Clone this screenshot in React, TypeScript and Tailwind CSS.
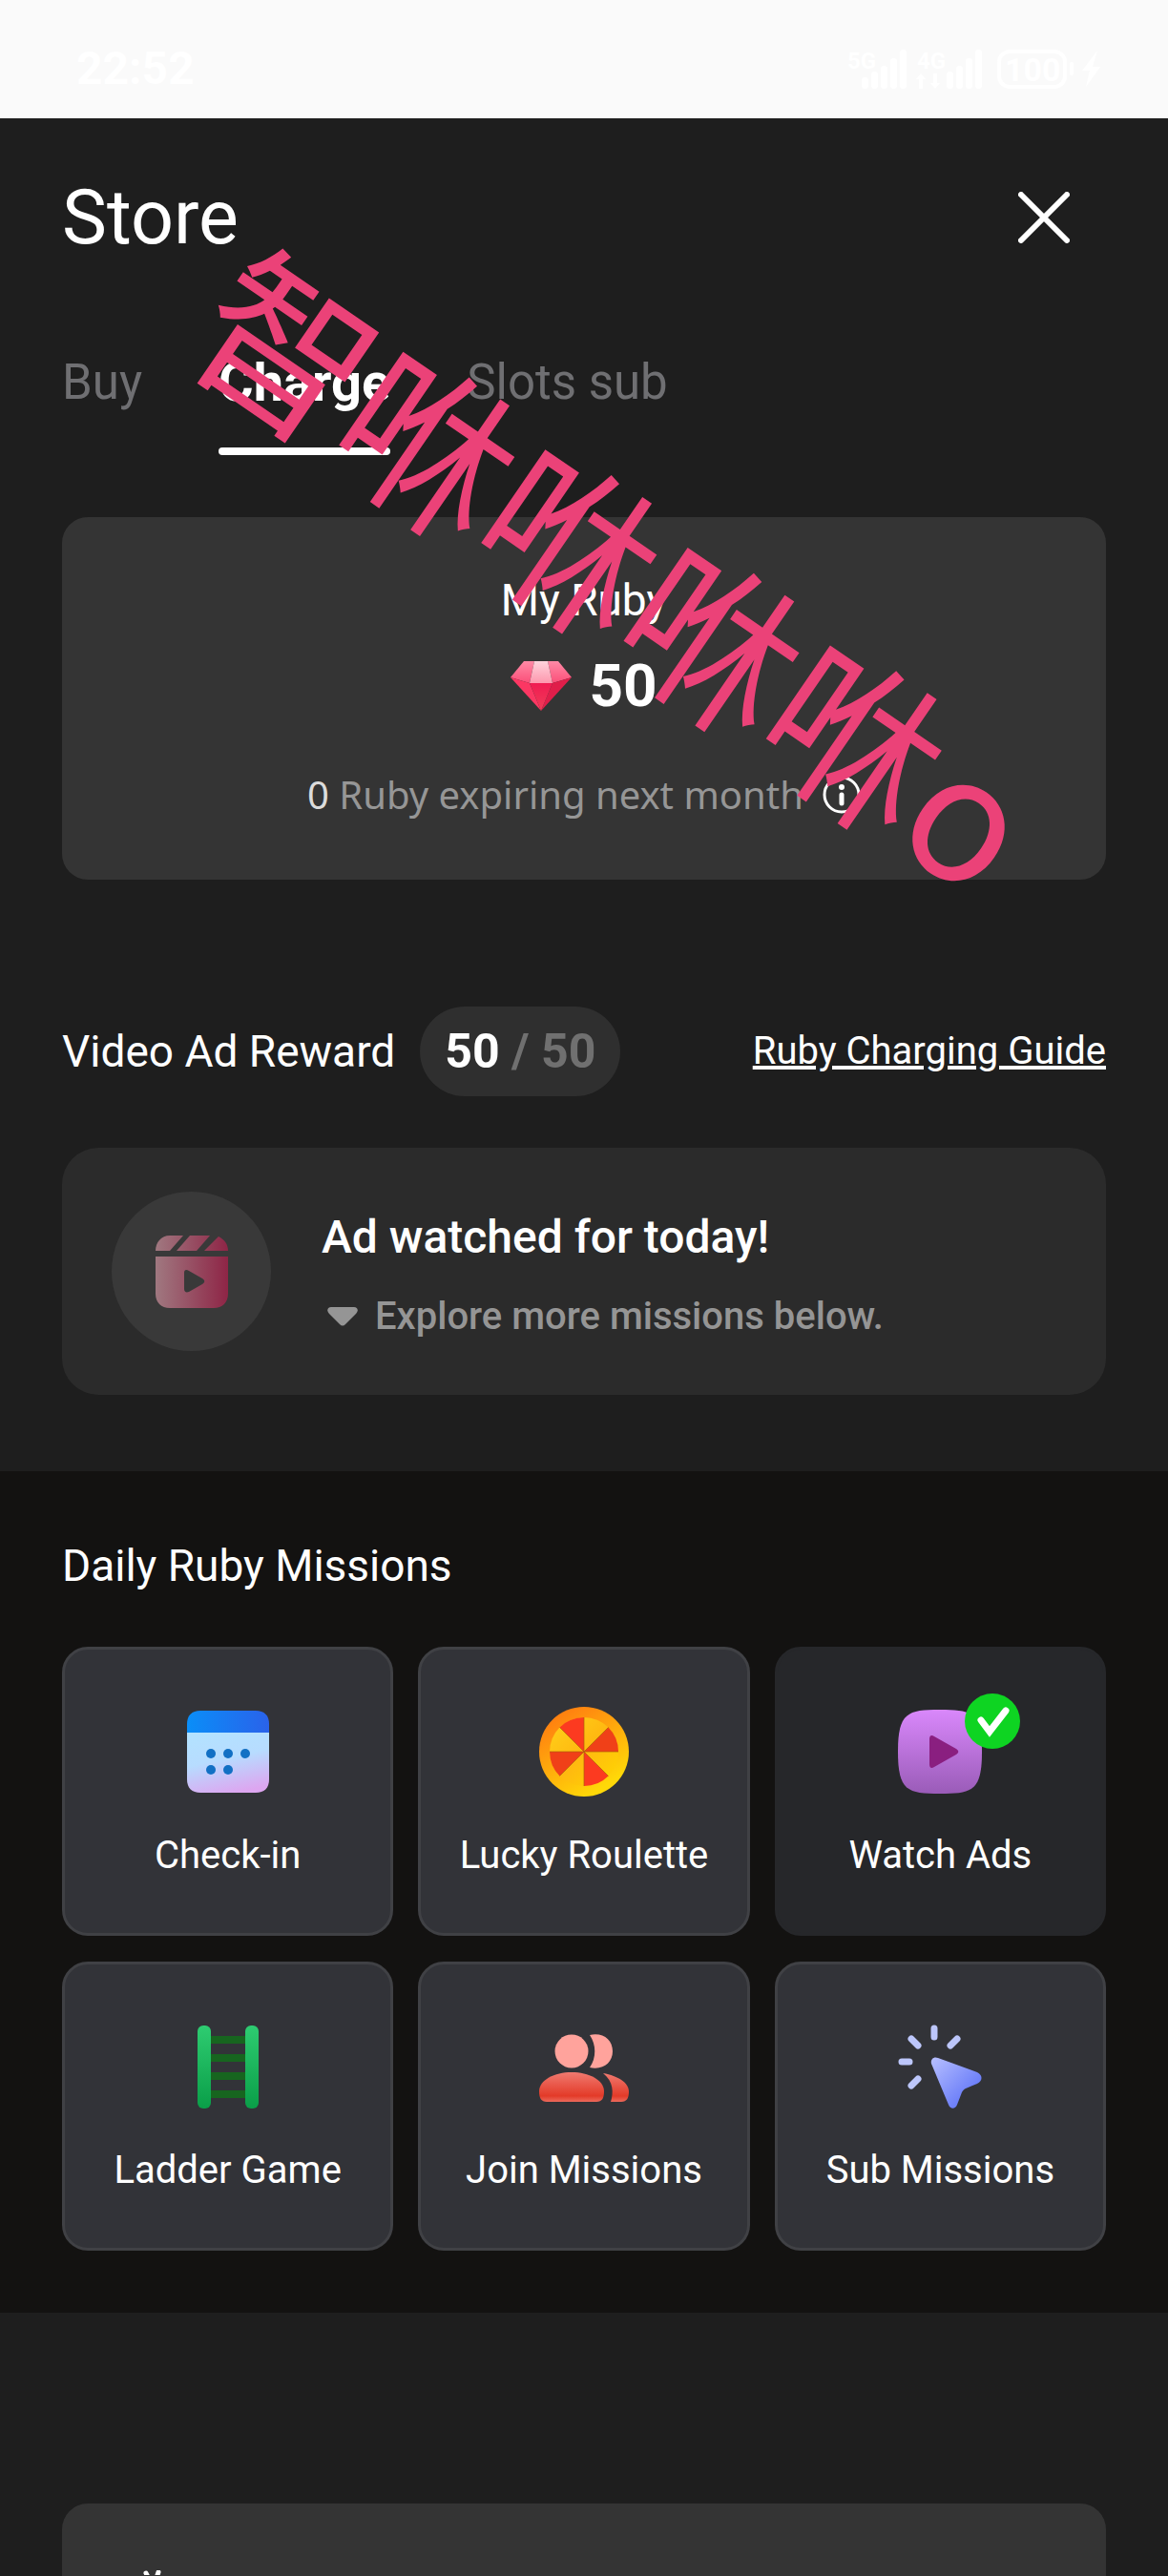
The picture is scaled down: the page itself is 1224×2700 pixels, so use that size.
import { useState, type ReactNode } from "react";

const tabs = ["Buy", "Charge", "Slots sub"];

function StatusIcons() {
  return (
    <svg width="266" height="50" viewBox="0 0 266 50" fill="#fff" stroke="none">
      <text x="0" y="25" fontSize="24" fontWeight="700" fontFamily="Roboto, sans-serif">5G</text>
      <rect x="15" y="34" width="7" height="12" rx="3" />
      <rect x="25" y="28" width="7" height="18" rx="3" />
      <rect x="35" y="22" width="7" height="24" rx="3" />
      <rect x="45" y="14" width="7" height="32" rx="3" />
      <rect x="55" y="5" width="7" height="41" rx="3" />
      <text x="73" y="25" fontSize="24" fontWeight="700" fontFamily="Roboto, sans-serif">4G</text>
      <path d="M77 30l5 6h-3v10h-4V36h-3zM92 46l5-6h-3V30h-4v10h-3z" />
      <rect x="104" y="28" width="7" height="18" rx="3" />
      <rect x="114" y="22" width="7" height="24" rx="3" />
      <rect x="124" y="14" width="7" height="32" rx="3" />
      <rect x="134" y="5" width="7" height="41" rx="3" />
      <rect x="159" y="7" width="69" height="37" rx="11" fill="none" stroke="#fff" strokeWidth="4" />
      <text x="165" y="38" fontSize="34" fontWeight="700" fontFamily="Roboto, sans-serif">100</text>
      <rect x="233" y="18" width="4" height="14" rx="2" />
      <path d="M262 6L246 27h8l-4 17 15-21h-8z" />
    </svg>
  );
}

function CloseIcon() {
  return (
    <svg width="54" height="54" viewBox="0 0 54 54" fill="none" stroke="#fff" strokeWidth="6" strokeLinecap="round">
      <path d="M3 3l48 48M51 3L3 51" />
    </svg>
  );
}

function RubyIcon() {
  return (
    <svg width="64" height="52" viewBox="0 0 64 52">
      <defs>
        <linearGradient id="rubySide" x1="0" y1="0" x2="0" y2="1">
          <stop offset="0" stopColor="#ff8aa6" />
          <stop offset="1" stopColor="#fb4e78" />
        </linearGradient>
        <linearGradient id="rubyTop" x1="0" y1="0" x2="0" y2="1">
          <stop offset="0" stopColor="#ffd3dc" />
          <stop offset="1" stopColor="#fd97ad" />
        </linearGradient>
        <linearGradient id="rubyMid" x1="0" y1="0" x2="0" y2="1">
          <stop offset="0" stopColor="#f01c52" />
          <stop offset="1" stopColor="#f03c58" />
        </linearGradient>
      </defs>
      <path d="M14 0L0 17l20 6L25 0z" fill="url(#rubySide)" />
      <path d="M50 0l14 17-20 6L39 0z" fill="url(#rubySide)" />
      <path d="M25 0h14l5 23H20z" fill="url(#rubyTop)" />
      <path d="M0 17l20 6 12 29z" fill="#fb3763" />
      <path d="M64 17l-20 6-12 29z" fill="#e01e4a" />
      <path d="M20 23h24L32 52z" fill="url(#rubyMid)" />
    </svg>
  );
}

function InfoIcon() {
  return (
    <svg width="40" height="40" viewBox="0 0 40 40" fill="none">
      <circle cx="20" cy="20" r="18" stroke="#fff" strokeWidth="3" />
      <circle cx="20" cy="12" r="3" fill="#fff" />
      <path d="M20 20v9" stroke="#fff" strokeWidth="5" strokeLinecap="round" />
    </svg>
  );
}

function ClapperIcon() {
  return (
    <svg width="76" height="76" viewBox="0 0 76 76">
      <defs>
        <linearGradient id="clapper" gradientUnits="userSpaceOnUse" x1="0" y1="0" x2="76" y2="0">
          <stop offset="0" stopColor="#a07880" />
          <stop offset="1" stopColor="#8e2546" />
        </linearGradient>
      </defs>
      <g fill="url(#clapper)">
        <path d="M15 0h14L15 16H0C0 7 6 0 15 0z" />
        <path d="M36 0h21L43 16H22z" />
        <path d="M66 1c6 3 10 8 10 15H51z" />
        <path
          fillRule="evenodd"
          d="M0 22h76v39c0 9-6 15-15 15H15C6 76 0 70 0 61zM30 39v17c0 3 2 4 5 3l14-8c3-2 3-4 0-6l-14-8c-3-2-5-1-5 2z"
        />
      </g>
    </svg>
  );
}

function DownGem() {
  return (
    <svg width="32" height="20" viewBox="0 0 32 20" fill="#959595">
      <path d="M4 0h24c4 0 5 4 2 7L19 18c-2 2-4 2-6 0L2 7C-1 4 0 0 4 0z" />
    </svg>
  );
}

function CalendarIcon() {
  return (
    <svg width="86" height="86" viewBox="0 0 86 86">
      <defs>
        <linearGradient id="calHead" x1="0" y1="0" x2="1" y2="0">
          <stop offset="0" stopColor="#0a8ef8" />
          <stop offset="1" stopColor="#2a62ea" />
        </linearGradient>
        <linearGradient id="calBody" x1="0.3" y1="0" x2="0.6" y2="1">
          <stop offset="0" stopColor="#b3e2ff" />
          <stop offset="0.45" stopColor="#b7dcff" />
          <stop offset="1" stopColor="#dda6f0" />
        </linearGradient>
      </defs>
      <path d="M0 22h86v50c0 9-5 14-14 14H14C5 86 0 81 0 72z" fill="url(#calBody)" />
      <path d="M14 0h58c9 0 14 5 14 14v9H0v-9C0 5 5 0 14 0z" fill="url(#calHead)" />
      <g fill="#1270c4">
        <circle cx="25" cy="45" r="5" />
        <circle cx="43" cy="45" r="5" />
        <circle cx="61" cy="45" r="5" />
        <circle cx="25" cy="62" r="5" />
        <circle cx="43" cy="62" r="5" />
      </g>
    </svg>
  );
}

function RouletteIcon() {
  return (
    <svg width="94" height="94" viewBox="0 0 94 94">
      <defs>
        <linearGradient id="rim" x1="0.2" y1="0.1" x2="0.7" y2="0.9">
          <stop offset="0" stopColor="#ff8010" />
          <stop offset="1" stopColor="#ffd808" />
        </linearGradient>
        <linearGradient id="disc" x1="0" y1="0" x2="1" y2="1">
          <stop offset="0" stopColor="#ffd21a" />
          <stop offset="0.5" stopColor="#ffb810" />
          <stop offset="1" stopColor="#ffd800" />
        </linearGradient>
      </defs>
      <circle cx="47" cy="47" r="47" fill="url(#rim)" />
      <circle cx="47" cy="47" r="36" fill="url(#disc)" />
      <path d="M47 47V11A36 36 0 0 0 21.5 21.5z" fill="#fc3a20" />
      <path d="M47 47L72.5 21.5A36 36 0 0 1 83 47z" fill="#f04018" />
      <path d="M47 47H11A36 36 0 0 0 21.5 72.5z" fill="#f04018" />
      <path d="M47 47v36A36 36 0 0 0 72.5 72.5z" fill="#fc3a20" />
      <path d="M47 11v72M11 47h72M21.5 21.5l51 51M72.5 21.5l-51 51" stroke="#b06008" strokeWidth="0.7" />
    </svg>
  );
}

function WatchIcon() {
  return (
    <svg width="88" height="90" viewBox="0 0 88 90" className="overflow-visible">
      <defs>
        <linearGradient id="watch" x1="0" y1="0" x2="0" y2="1">
          <stop offset="0" stopColor="#d988fb" />
          <stop offset="1" stopColor="#9a5cb8" />
        </linearGradient>
      </defs>
      <path
        d="M44 1c34 0 44 3 44 44S78 89 44 89 0 86 0 45 10 1 44 1z"
        fill="url(#watch)"
      />
      <path d="M33 32v26c0 4 2 5 5 3l23-13c3-2 3-4 0-6L38 29c-3-2-5-1-5 3z" fill="#8a1f80" />
      <circle cx="99" cy="13" r="29" fill="#0ed422" />
      <path d="M87 12l9 12 17-22" fill="none" stroke="#fff" strokeWidth="7" strokeLinecap="round" />
    </svg>
  );
}

function LadderIcon() {
  return (
    <svg width="64" height="87" viewBox="0 0 64 87">
      <defs>
        <linearGradient id="rail" x1="0" y1="0" x2="0" y2="1">
          <stop offset="0" stopColor="#2ecc71" />
          <stop offset="1" stopColor="#0a9e48" />
        </linearGradient>
      </defs>
      <path d="M8 15h48M8 34h48M8 53h48M8 72h48" stroke="#17651f" strokeWidth="8" />
      <rect x="0" y="0" width="14" height="87" rx="6" fill="url(#rail)" />
      <rect x="50" y="0" width="14" height="87" rx="6" fill="url(#rail)" />
    </svg>
  );
}

function PeopleIcon() {
  return (
    <svg width="94" height="70" viewBox="0 0 94 70" className="overflow-visible">
      <defs>
        <linearGradient id="people" x1="0" y1="0" x2="0" y2="1">
          <stop offset="0" stopColor="#f07a70" />
          <stop offset="0.8" stopColor="#e33a28" />
          <stop offset="1" stopColor="#ec6a5c" />
        </linearGradient>
      </defs>
      <g transform="translate(0 1)">
        <circle cx="34" cy="18" r="17.5" fill="#ffa39c" />
        <path d="M53 1c14-3 24 5 24 17s-10 20-24 17c7-10 7-24 0-34z" fill="#ffa39c" />
        <path d="M34 40c18 0 34 8 34 20 0 7-2 11-8 11H8c-6 0-8-4-8-11 0-12 16-20 34-20z" fill="url(#people)" />
        <path d="M67 41c16 3 27 10 27 19 0 7-2 11-8 11H75c3-10 3-21-8-30z" fill="url(#people)" />
      </g>
    </svg>
  );
}

function CursorIcon() {
  return (
    <svg width="88" height="88" viewBox="0 0 88 88">
      <defs>
        <linearGradient id="cursor" x1="0" y1="0" x2="0.8" y2="0.8">
          <stop offset="0" stopColor="#b8c0ff" />
          <stop offset="1" stopColor="#6478f8" />
        </linearGradient>
      </defs>
      <path d="M38 4v9M14 15l7 7M62 15l-7 7M4 39h8M21 57l-7 7" stroke="#bcc6fb" strokeWidth="7" strokeLinecap="round" />
      <path
        d="M42 35l41 15c6 3 6 9 0 12l-12 5c-2 1-3 2-4 4l-5 13c-2 5-7 5-9 0L35 41c-1-4 2-8 7-6z"
        fill="url(#cursor)"
      />
    </svg>
  );
}

const missions: { label: string; icon: ReactNode; done?: boolean }[] = [
  { label: "Check-in", icon: <CalendarIcon /> },
  { label: "Lucky Roulette", icon: <RouletteIcon /> },
  { label: "Watch Ads", icon: <WatchIcon />, done: true },
  { label: "Ladder Game", icon: <LadderIcon /> },
  { label: "Join Missions", icon: <PeopleIcon /> },
  { label: "Sub Missions", icon: <CursorIcon /> },
];

export default function App() {
  const [active, setActive] = useState("Charge");

  return (
    <div className="relative flex min-h-screen flex-col overflow-hidden bg-[#1e1e1e] font-[Roboto,sans-serif] text-white">
      {/* Status bar */}
      <div className="flex h-[124px] items-center justify-between bg-[#fafafa] pt-5 pr-[70px] pl-[80px]">
        <span className="text-[48px] leading-none font-bold">22:52</span>
        <StatusIcons />
      </div>

      {/* Header */}
      <header className="flex items-center justify-between px-[65px] pt-[52px]">
        <h1 className="text-[79px] leading-[104px]">Store</h1>
        <button aria-label="Close" className="mr-[38px]">
          <CloseIcon />
        </button>
      </header>

      {/* Tabs */}
      <nav className="flex gap-[80px] px-[65px] pt-[85px]">
        {tabs.map((tab) => (
          <button
            key={tab}
            onClick={() => setActive(tab)}
            className={`flex flex-col gap-[32px] leading-[72px] ${
              active === tab ? "text-[56px] font-bold text-white" : "text-[51px] text-[#6f6f72]"
            }`}
          >
            {tab}
            <span className={`h-2 w-full rounded-full ${active === tab ? "bg-white" : "bg-transparent"}`} />
          </button>
        ))}
      </nav>

      {/* Balance */}
      <section className="mx-[65px] mt-[65px] flex flex-col items-center rounded-[27px] bg-[#343434] pt-[57px] pb-[61px]">
        <h2 className="text-[46px] leading-[60px]">My Ruby</h2>
        <div className="mt-[24px] flex items-center gap-[18px]">
          <RubyIcon />
          <span className="text-[62px] leading-[72px] font-bold">50</span>
        </div>
        <div className="mt-[50px] flex items-center gap-[20px]">
          <p className="font-['Noto_Sans',sans-serif] text-[40px] leading-[56px] text-[#969696]">
            <span className="text-[#dcdcdc]">0</span> Ruby expiring next month
          </p>
          <button aria-label="About expiring rubies">
            <InfoIcon />
          </button>
        </div>
      </section>

      {/* Video ads */}
      <section className="px-[65px] pt-[133px] pb-[80px]">
        <div className="flex items-center justify-between">
          <div className="flex items-center gap-[26px]">
            <h2 className="text-[46px] leading-[60px]">Video Ad Reward</h2>
            <div className="rounded-full bg-[#2f2f2f] px-[26px] py-[17px] text-[50px] leading-[60px] font-bold">
              50 <span className="text-[#707070]">/ 50</span>
            </div>
          </div>
          <a href="#guide" className="text-[40px] leading-[60px] underline">
            Ruby Charging Guide
          </a>
        </div>

        <div className="mt-[54px] flex items-center gap-[53px] rounded-[38px] bg-[#2b2b2b] px-[52px] py-[46px]">
          <div className="flex size-[167px] items-center justify-center rounded-full bg-[#393939]">
            <ClapperIcon />
          </div>
          <div className="pt-[10px]">
            <h3 className="text-[48px] leading-[64px] font-medium">Ad watched for today!</h3>
            <p className="mt-[21px] flex items-center gap-[18px] pl-[6px] text-[40px] leading-[60px] font-medium text-[#959595]">
              <DownGem />
              Explore more missions below.
            </p>
          </div>
        </div>
      </section>

      {/* Missions */}
      <section className="bg-[#131211] px-[65px] pt-[69px] pb-[65px]">
        <h2 className="text-[46px] leading-[60px]">Daily Ruby Missions</h2>
        <div className="mt-[55px] grid grid-cols-3 gap-x-[26px] gap-y-[27px]">
          {missions.map((m) => (
            <button
              key={m.label}
              className={`flex flex-col items-center rounded-[27px] border-[3px] pt-[54px] pb-[51px] ${
                m.done ? "border-[#26272a] bg-[#26272a]" : "border-[#404145] bg-[#323338]"
              }`}
            >
              <span className="flex h-[106px] items-center">{m.icon}</span>
              <span className="mt-[26px] text-[40px] leading-[60px]">{m.label}</span>
            </button>
          ))}
        </div>
      </section>

      <section className="mx-[65px] mt-[200px] flex-1 rounded-t-[27px] bg-[#343434] pt-[70px] pl-[85px]">
        <svg width="20" height="5" viewBox="0 0 20 5" stroke="#fff" strokeWidth="5" strokeLinecap="round">
          <path d="M3 3l3 6M16 2l-2 6" />
        </svg>
      </section>

      {/* Watermark */}
      <p className="pointer-events-none absolute top-[502px] left-[141px] rotate-[34.5deg] font-['Noto_Sans_CJK_SC',sans-serif] text-[181px] leading-[181px] whitespace-nowrap text-[#eb4278]">
        智咻咻咻咻o
      </p>
    </div>
  );
}
